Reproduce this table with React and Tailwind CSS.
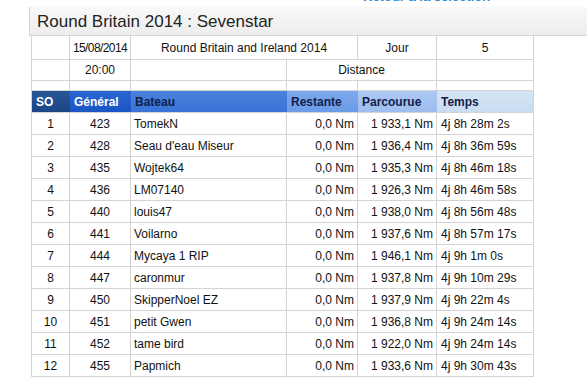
import React from "react";

const rows = [
  [1, 423, "TomekN", "0,0 Nm", "1 933,1 Nm", "4j 8h 28m 2s"],
  [2, 428, "Seau d'eau Miseur", "0,0 Nm", "1 936,4 Nm", "4j 8h 36m 59s"],
  [3, 435, "Wojtek64", "0,0 Nm", "1 935,3 Nm", "4j 8h 46m 18s"],
  [4, 436, "LM07140", "0,0 Nm", "1 926,3 Nm", "4j 8h 46m 58s"],
  [5, 440, "louis47", "0,0 Nm", "1 938,0 Nm", "4j 8h 56m 48s"],
  [6, 441, "Voilarno", "0,0 Nm", "1 937,6 Nm", "4j 8h 57m 17s"],
  [7, 444, "Mycaya 1 RIP", "0,0 Nm", "1 946,1 Nm", "4j 9h 1m 0s"],
  [8, 447, "caronmur", "0,0 Nm", "1 937,8 Nm", "4j 9h 10m 29s"],
  [9, 450, "SkipperNoel EZ", "0,0 Nm", "1 937,9 Nm", "4j 9h 22m 4s"],
  [10, 451, "petit Gwen", "0,0 Nm", "1 936,8 Nm", "4j 9h 24m 14s"],
  [11, 452, "tame bird", "0,0 Nm", "1 922,0 Nm", "4j 9h 24m 14s"],
  [12, 455, "Papmich", "0,0 Nm", "1 933,6 Nm", "4j 9h 30m 43s"],
];

const cell = "border-r border-b border-[#d4d4d4] p-0";
const head = "p-0 pl-[4px] text-left font-bold border-b border-[#d4d4d4]";

export default function App() {
  return (
    <div className="w-[587px] h-[377px] overflow-hidden bg-white text-[#111] font-['Liberation_Sans',Arial,sans-serif]">
      {/* link from the page above, only its bottom shows */}
      <div className="h-[7px] overflow-hidden pl-[363px]">
        <div className="-mt-[10px] text-[13px] leading-[13px] font-bold text-[#2a8ad3] whitespace-nowrap">
          Retour à la sélection
        </div>
      </div>

      <div className="ml-[29px] h-[29px] flex items-center pl-[7px] border-l border-b border-[#d6d6d6] bg-gradient-to-b from-[#f9f9f9] to-[#ededed]">
        <h1 className="text-[17px] leading-none text-[#222] whitespace-nowrap">Round Britain 2014 : Sevenstar</h1>
      </div>

      <table className="ml-[31px] border-separate border-spacing-0 table-fixed w-[502px] border-l border-[#d4d4d4] text-[12px] leading-none">
        <colgroup>
          <col className="w-[38px]" />
          <col className="w-[61px]" />
          <col className="w-[156px]" />
          <col className="w-[71px]" />
          <col className="w-[79px]" />
          <col className="w-[97px]" />
        </colgroup>
        <tbody>
          <tr className="h-[24px] text-center">
            <td className={cell}></td>
            <td className={`${cell} tracking-[-0.6px]`}>15/08/2014</td>
            <td className={cell} colSpan={2}>Round Britain and Ireland 2014</td>
            <td className={cell}>Jour</td>
            <td className={cell}>5</td>
          </tr>
          <tr className="h-[21px] text-center">
            <td className={cell}></td>
            <td className={cell}>20:00</td>
            <td className={cell}></td>
            <td className={cell} colSpan={2}>Distance</td>
            <td className={cell}></td>
          </tr>
          <tr className="h-[10px]">
            <td className={cell}></td>
            <td className={cell}></td>
            <td className={cell}></td>
            <td className={cell}></td>
            <td className={cell}></td>
            <td className={cell}></td>
          </tr>
          <tr className="h-[22px]">
            <th className={`${head} text-white bg-gradient-to-b from-[#2a5699] to-[#1c4585]`}>SO</th>
            <th className={`${head} text-white bg-gradient-to-b from-[#2a66d2] to-[#1a55c4]`}>Général</th>
            <th className={`${head} text-[#12204a] bg-gradient-to-b from-[#4a82dd] to-[#3873d6]`}>Bateau</th>
            <th className={`${head} text-[#12204a] bg-gradient-to-b from-[#7ca8ec] to-[#6b9be6]`}>Restante</th>
            <th className={`${head} text-[#12204a] bg-gradient-to-b from-[#adc9f3] to-[#9dbcee]`}>Parcourue</th>
            <th className={`${head} text-[#12204a] bg-gradient-to-b from-[#d6e5f5] to-[#c8dcf1] border-r`}>Temps</th>
          </tr>
          {rows.map((r) => (
            <tr key={r[0]} className="h-[22px]">
              <td className={`${cell} text-center`}>{r[0]}</td>
              <td className={`${cell} text-center`}>{r[1]}</td>
              <td className={`${cell} pl-[3px]`}>{r[2]}</td>
              <td className={`${cell} text-right pr-[3px]`}>{r[3]}</td>
              <td className={`${cell} text-right pr-[3px]`}>{r[4]}</td>
              <td className={`${cell} pl-[4px]`}>{r[5]}</td>
            </tr>
          ))}
        </tbody>
      </table>
    </div>
  );
}
